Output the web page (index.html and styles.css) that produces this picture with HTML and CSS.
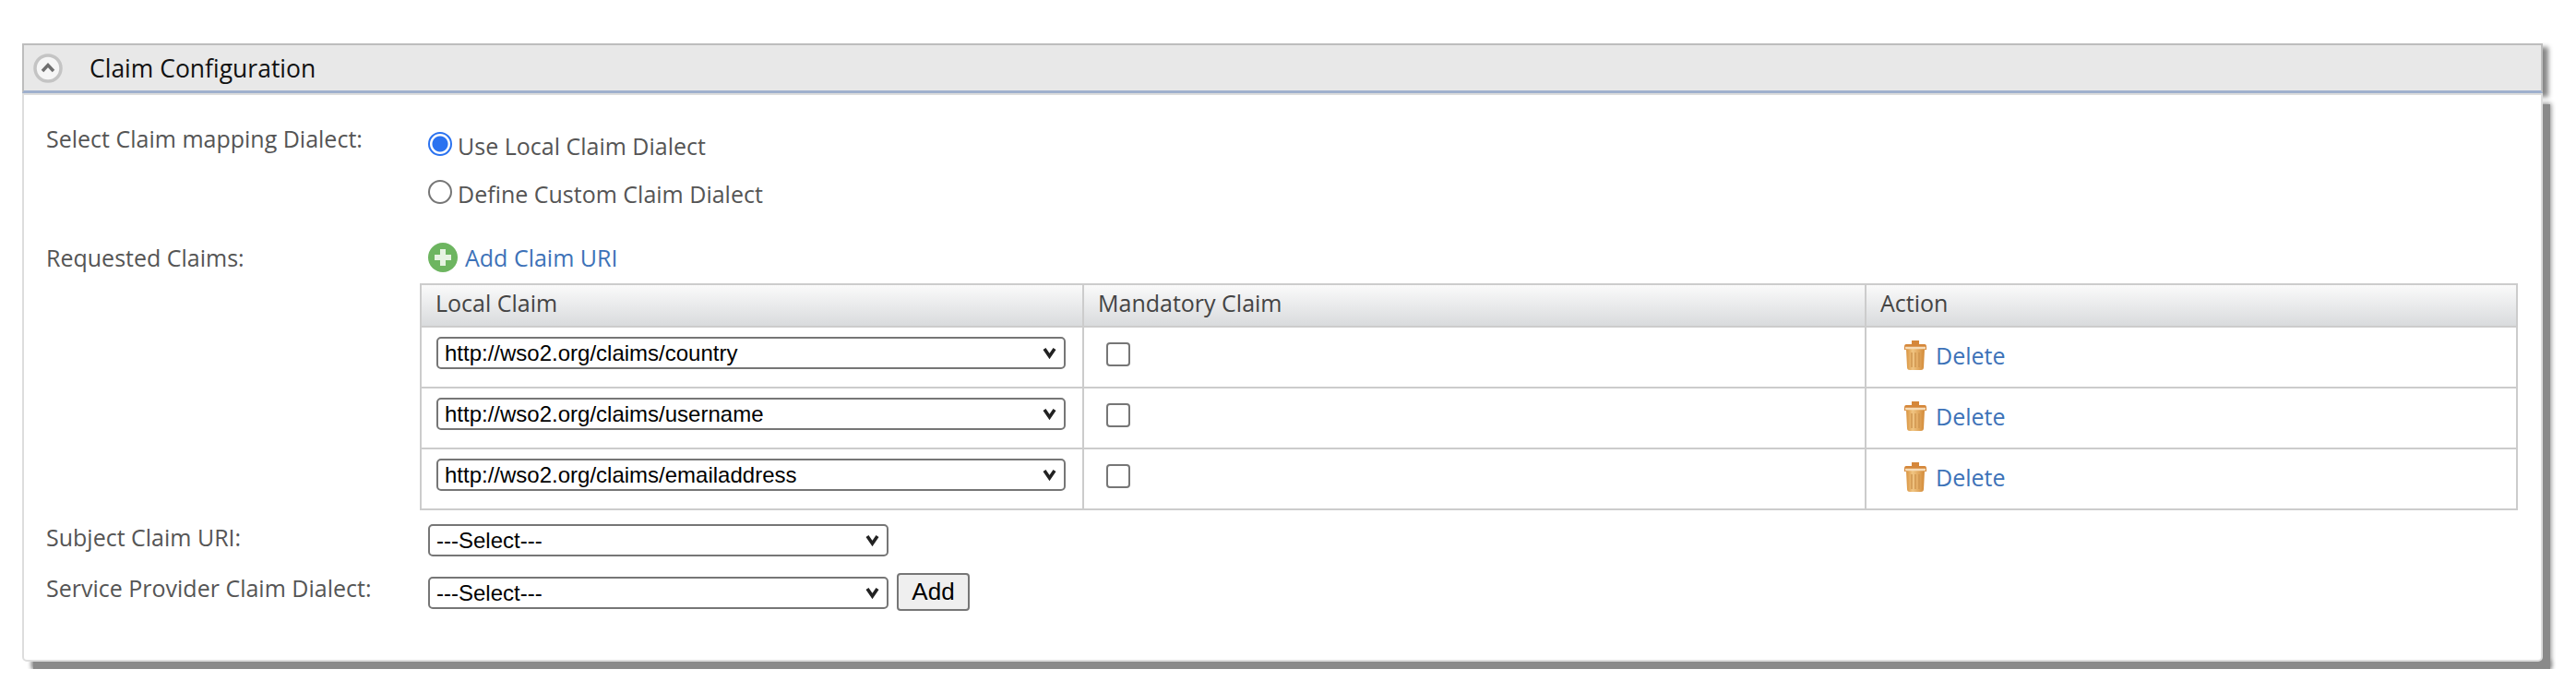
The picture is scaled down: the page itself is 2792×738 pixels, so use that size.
FILE: index.html
```html
<!DOCTYPE html>
<html lang="en">
<head>
    <meta charset="UTF-8">
    <meta name="viewport" content="width=device-width, initial-scale=1.0">
    <title>Claim Configuration</title>
    <link rel="stylesheet" href="styles.css">
</head>
<body>
    <svg class="defs" width="0" height="0">
        <defs>
            <linearGradient id="canBody">
                <stop offset="0" stop-color="#d9933f"/>
                <stop offset="0.35" stop-color="#f0c583"/>
                <stop offset="1" stop-color="#d38a38"/>
            </linearGradient>
            <symbol id="trash" viewBox="0 0 26 34">
                <path d="M9 1 H17 V5 H23 Q25 5 25 8 V11 H1 V8 Q1 5 3 5 H9 Z" fill="#d5873a"/>
                <path d="M3 10 H23 L22 30 Q22 33 19 33 H7 Q4 33 4 30 Z" fill="url(#canBody)"/>
                <path d="M2 9 H24" stroke="#f6dcb8" stroke-width="2.5"/>
                <path d="M9 14 V30 M13 14 V30 M17 14 V30" stroke="#cf9650" stroke-width="1.5"/>
            </symbol>
        </defs>
    </svg>
    <div class="panel">
        <h2 class="panel-head">
            <svg class="toggle" width="32" height="32" viewBox="0 0 32 32">
                <circle cx="16" cy="16" r="14" fill="#f6f6f6" stroke="#c4c4c4" stroke-width="3.5"/>
                <path d="M10 19 L16 12.5 L22 19" fill="none" stroke="#6f6f6f" stroke-width="3.5"/>
            </svg>
            Claim Configuration
        </h2>
        <div class="panel-body">
            <div class="row row-dialect">
                <div class="label">Select Claim mapping Dialect:</div>
                <div class="field">
                    <label class="radio"><input type="radio" name="dialect" checked> Use Local Claim Dialect</label>
                    <label class="radio"><input type="radio" name="dialect"> Define Custom Claim Dialect</label>
                </div>
            </div>
            <div class="row row-claims">
                <div class="label">Requested Claims:</div>
                <div class="field">
                    <a class="add-link" href="#">
                        <svg width="32" height="32" viewBox="0 0 32 32">
                            <circle cx="16" cy="16" r="16" fill="#6db560"/>
                            <path d="M16 7 V25 M7 16 H25" stroke="#e6f3e2" stroke-width="6"/>
                        </svg>
                        Add Claim URI
                    </a>
                </div>
            </div>
            <table class="claims">
                <thead>
                    <tr>
                        <th class="col-local">Local Claim</th>
                        <th class="col-mandatory">Mandatory Claim</th>
                        <th>Action</th>
                    </tr>
                </thead>
                <tbody>
                    <tr>
                        <td><select class="claim-select"><option>http://wso2.org/claims/country</option></select></td>
                        <td><input class="check" type="checkbox"></td>
                        <td><a class="delete" href="#"><svg width="26" height="34"><use href="#trash"/></svg>Delete</a></td>
                    </tr>
                    <tr>
                        <td><select class="claim-select"><option>http://wso2.org/claims/username</option></select></td>
                        <td><input class="check" type="checkbox"></td>
                        <td><a class="delete" href="#"><svg width="26" height="34"><use href="#trash"/></svg>Delete</a></td>
                    </tr>
                    <tr>
                        <td><select class="claim-select"><option>http://wso2.org/claims/emailaddress</option></select></td>
                        <td><input class="check" type="checkbox"></td>
                        <td><a class="delete" href="#"><svg width="26" height="34"><use href="#trash"/></svg>Delete</a></td>
                    </tr>
                </tbody>
            </table>
            <div class="row row-subject">
                <div class="label">Subject Claim URI:</div>
                <div class="field">
                    <select class="plain-select"><option>---Select---</option></select>
                </div>
            </div>
            <div class="row row-provider">
                <div class="label">Service Provider Claim Dialect:</div>
                <div class="field field-inline">
                    <select class="plain-select"><option>---Select---</option></select>
                    <button class="add-btn">Add</button>
                </div>
            </div>
        </div>
        <div class="panel-foot"></div>
    </div>
</body>
</html>
```

FILE: styles.css
```css
body {
    font-family: "Open Sans", Arial, sans-serif;
    font-size: 25px;
    margin: 0;
    padding: 0;
    background-color: #fff;
    color: #555;
}

.defs {
    position: absolute;
}

.panel {
    position: relative;
    margin: 47px 36px 0 24px;
}

/* drop shadow of the body part, sits under the panel */
.panel::before {
    content: "";
    position: absolute;
    top: 66px;
    left: 12px;
    right: -8px;
    bottom: 2px;
    background-color: #8a8a8a;
    box-shadow: 0 0 5px 1px #8a8a8a;
}

.panel-foot {
    height: 8px;
    margin: 0 -8px 0 12px;
    background-color: #8a8a8a;
    box-shadow: 0 0 5px 1px #8a8a8a;
}

.panel-head {
    display: flex;
    align-items: center;
    gap: 29px;
    height: 49px;
    margin: 0;
    padding-left: 10px;
    background-color: #e8e8e8;
    border-top: 2px solid #bdbdbd;
    border-left: 2px solid #bdbdbd;
    border-right: 2px solid #bdbdbd;
    border-bottom: 3px solid #9fb0cd;
    box-shadow: 6px 4px 5px #888;
    color: #111;
    font-size: 26.5px;
    font-weight: normal;
    position: relative;
}

.panel-body {
    position: relative;
    height: 616px;
    padding: 34px 0 0 24px;
    box-sizing: border-box;
    background-color: #fff;
    border-top: 2px solid #ddd;
    border-left: 2px solid #ddd;
    border-right: 2px solid #ddd;
    border-bottom: 2px solid #ddd;
    border-radius: 0 0 5px 5px;
}

.row {
    display: grid;
    grid-template-columns: 414px 1fr;
}

.label {
    line-height: 26px;
}

.radio {
    display: flex;
    align-items: flex-start;
    gap: 6px;
    height: 52px;
    line-height: 34px;
    margin-top: 4px;
}

.radio + .radio {
    margin-top: 0;
}

.radio input {
    appearance: none;
    width: 26px;
    height: 26px;
    margin: 2px 0 0;
    border: 2px solid #767676;
    border-radius: 50%;
    background-color: #fff;
    flex-shrink: 0;
}

.radio input:checked {
    border-color: #2a72f0;
    background: radial-gradient(circle, #2a72f0 0, #2a72f0 8px, #fff 9px);
}

.row-dialect {
    height: 126px;
}

.row-claims {
    height: 44px;
}

.row-claims .label {
    margin-top: 3px;
}

.add-link {
    display: inline-flex;
    align-items: center;
    gap: 8px;
    color: #3d72b8;
    text-decoration: none;
    line-height: 32px;
}

/* claims table */
.claims {
    border-collapse: collapse;
    table-layout: fixed;
    width: 2274px;
    margin-left: 405px;
}

.claims th {
    height: 46px;
    padding: 0 16px 6px 15px;
    box-sizing: border-box;
    text-align: left;
    font-weight: normal;
    color: #444;
    border: 2px solid #ccc;
    background: linear-gradient(#fafafa, #d9dbdd);
}

.claims td {
    height: 64px;
    padding: 0 16px;
    vertical-align: top;
    border: 2px solid #ccc;
}

.col-local {
    width: 718px;
}

.col-mandatory {
    width: 848px;
}

select {
    appearance: none;
    font-family: "Liberation Sans", Arial, sans-serif;
    font-size: 24px;
    height: 35px;
    padding: 0 2px 0 7px;
    color: #000;
    background: #fff url("data:image/svg+xml,%3Csvg xmlns='http://www.w3.org/2000/svg' width='15' height='13'%3E%3Cpath d='M2 2 L7.5 10 L13 2' fill='none' stroke='%23222' stroke-width='3.6'/%3E%3C/svg%3E") no-repeat right 8px center;
    border: 2px solid #767676;
    border-radius: 5px;
}

.claim-select {
    width: 682px;
    margin-top: 10px;
}

.plain-select {
    width: 499px;
}

.check {
    appearance: none;
    width: 26px;
    height: 26px;
    margin: 16px 0 0 8px;
    background-color: #fff;
    border: 2px solid #767676;
    border-radius: 4px;
}

.delete {
    display: inline-flex;
    align-items: center;
    gap: 9px;
    margin: 13px 0 0 24px;
    color: #3d72b8;
    text-decoration: none;
}

.row-subject {
    margin-top: 14px;
    height: 58px;
}

.row-subject .label {
    margin-top: 2px;
}

.row-provider .label {
    margin-top: -1px;
}

.field-inline {
    display: flex;
    align-items: flex-start;
    gap: 9px;
}

.add-btn {
    font-family: "Liberation Sans", Arial, sans-serif;
    font-size: 26px;
    width: 79px;
    height: 41px;
    margin-top: -4px;
    padding: 0;
    color: #000;
    background-color: #efefef;
    border: 2px solid #767676;
    border-radius: 4px;
}
```
